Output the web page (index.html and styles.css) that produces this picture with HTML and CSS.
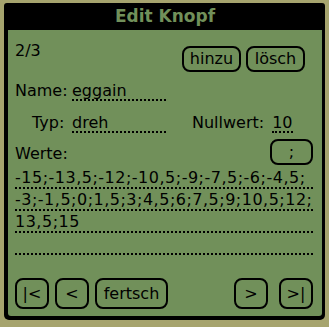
FILE: index.html
```html
<!DOCTYPE html>
<html lang="de">
<head>
  <meta charset="UTF-8">
  <title>Edit Knopf</title>
  <link rel="stylesheet" href="styles.css">
</head>
<body>

<div class="screen">
  <div class="dialog">
    <div class="title">Edit Knopf</div>
    <div class="form">

      <div class="row top">
        <span class="page">2/3</span>
        <span class="spacer"></span>
        <button class="btn small">hinzu</button>
        <button class="btn small">lösch</button>
      </div>

      <div class="row name">
        <span class="label lname">Name:</span>
        <span class="field wide">eggain</span>
      </div>

      <div class="row typ">
        <span class="label ltyp">Typ:</span>
        <span class="field wide">dreh</span>
        <span class="label lnull">Nullwert:</span>
        <span class="field short">10</span>
      </div>

      <div class="row werte">
        <span class="label lwerte">Werte:</span>
        <span class="spacer"></span>
        <button class="btn semi">;</button>
      </div>

      <div class="values">
        <div class="line">-15;-13,5;-12;-10,5;-9;-7,5;-6;-4,5;</div>
        <div class="line">-3;-1,5;0;1,5;3;4,5;6;7,5;9;10,5;12;</div>
        <div class="line">13,5;15</div>
        <div class="line"></div>
      </div>

      <div class="row nav">
        <button class="btn arrow">|&lt;</button>
        <button class="btn arrow">&lt;</button>
        <button class="btn done">fertsch</button>
        <span class="spacer"></span>
        <button class="btn arrow">&gt;</button>
        <button class="btn arrow">&gt;|</button>
      </div>

    </div>
  </div>
</div>

</body>
</html>
```

FILE: styles.css
```css
body {
  margin: 0;
  background: #a6a46e;
  font-family: "DejaVu Sans", sans-serif;
  font-size: 16px;
  color: #000;
}
.screen {
  width: 329px;
  height: 327px;
  padding: 3px 4px 7px 4px;
  box-sizing: border-box;
}
.dialog {
  background: #000;
  padding: 0 3px 4px 4px;
  border-radius: 3px 3px 5px 5px;
}
.title {
  height: 27px;
  line-height: 27px;
  text-align: center;
  font-weight: bold;
  font-size: 17px;
  color: #71905a;
}
.form {
  background: #71905a;
  height: 286px;
  padding: 0 9px 0 7px;
  box-sizing: border-box;
  border-radius: 0 0 3px 3px;
}
.row {
  display: flex;
  align-items: flex-start;
  line-height: 18px;
}
.spacer {
  flex: 1;
}
.btn {
  font-family: "DejaVu Sans", sans-serif;
  font-size: 16px;
  color: #000;
  background: #71905a;
  border: 2px solid #000;
  border-radius: 8px;
  padding: 0;
  line-height: 18px;
}
.top {
  padding-top: 10px;
  height: 32px;
}
.page {
  margin-top: 2px;
}
.small {
  width: 59px;
  height: 26px;
  margin-top: 6px;
  margin-left: 5px;
}
.small:last-child {
  margin-right: 8px;
}
.name {
  margin-top: 10px;
}
.lname {
  width: 57px;
}
.field {
  display: block;
  border-bottom: 2px dotted #000;
  height: 17px;
}
.wide {
  width: 94px;
}
.short {
  width: 21px;
  margin-left: 8px;
}
.typ {
  margin-top: 13px;
}
.ltyp {
  margin-left: 17px;
  width: 40px;
}
.lnull {
  margin-left: 26px;
}
.werte {
  margin-top: 6px;
  height: 26px;
  align-items: center;
}
.lwerte {
  margin-top: 4px;
}
.semi {
  width: 43px;
  height: 26px;
}
.values {
  margin-top: 2px;
}
.line {
  height: 20px;
  line-height: 21px;
  border-bottom: 2px dotted #000;
  letter-spacing: 0.5px;
  white-space: nowrap;
}
.nav {
  margin-top: 23px;
}
.arrow {
  width: 34px;
  height: 31px;
  margin-right: 6px;
}
.arrow:last-child {
  margin-right: 0;
  margin-left: 5px;
}
.done {
  width: 73px;
  height: 31px;
}
```
